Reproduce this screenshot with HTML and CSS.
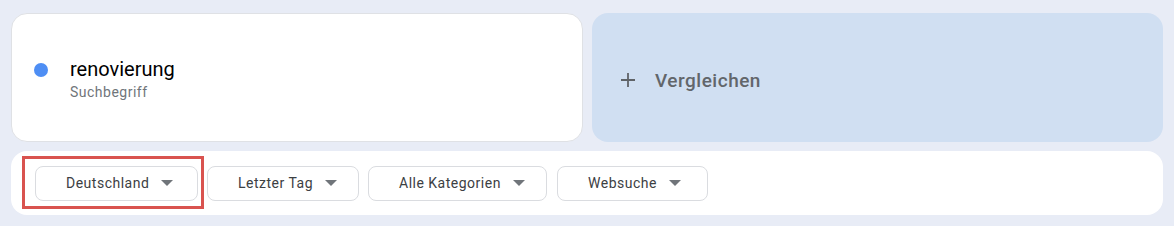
FILE: index.html
```html
<!DOCTYPE html>
<html lang="de">
<head>
<meta charset="utf-8">
<title>Trends</title>
<link rel="stylesheet" href="styles.css">
</head>
<body>
<div class="page">
  <div class="top-row">
    <div class="card term-card">
      <span class="dot"></span>
      <div class="term-text">
        <div class="term-title">renovierung</div>
        <div class="term-sub">Suchbegriff</div>
      </div>
    </div>
    <div class="card compare-card">
      <svg class="plus" width="14" height="14" viewBox="0 0 14 14" aria-hidden="true">
        <path d="M7 0V14M0 7H14" stroke="#5f6368" stroke-width="1.8" fill="none"/>
      </svg>
      <span class="compare-label">Vergleichen</span>
    </div>
  </div>
  <div class="filter-bar">
    <div class="chip chip-country">Deutschland<span class="caret"></span></div>
    <div class="chip chip-time">Letzter Tag<span class="caret"></span></div>
    <div class="chip chip-cat">Alle Kategorien<span class="caret"></span></div>
    <div class="chip chip-type">Websuche<span class="caret"></span></div>
    <div class="highlight"></div>
  </div>
</div>
</body>
</html>
```

FILE: styles.css
```css
* { box-sizing: border-box; }
html, body { margin: 0; padding: 0; }
body {
  background: #e8ecf6;
  font-family: Roboto, "Liberation Sans", sans-serif;
  width: 1174px;
  height: 226px;
  overflow: hidden;
}
.page {
  padding: 13px 11px 11px 11px;
  display: flex;
  flex-direction: column;
  gap: 9px;
}
.top-row {
  display: flex;
  gap: 9px;
  height: 129px;
}
.card {
  border-radius: 16px;
  display: flex;
}
.term-card {
  flex: none;
  width: 572px;
  background: #fff;
  border: 1px solid #dfe1e5;
  padding: 44px 0 0 22px;
  align-items: flex-start;
}
.dot {
  width: 14px;
  height: 14px;
  border-radius: 50%;
  background: #4e8ef4;
  margin-top: 5px;
  flex: none;
}
.term-text {
  margin-left: 22px;
  display: flex;
  flex-direction: column;
}
.term-title {
  font-size: 20px;
  line-height: 22px;
  color: #000;
}
.term-sub {
  font-size: 14px;
  line-height: 18px;
  margin-top: 3px;
  letter-spacing: 0.5px;
  color: #70757a;
}
.compare-card {
  flex: 1;
  background: #d0dff2;
  align-items: center;
  padding: 5px 0 0 29px;
}
.plus {
  flex: none;
  display: block;
}
.compare-label {
  margin-left: 20px;
  font-size: 19px;
  font-weight: 500;
  letter-spacing: 0.5px;
  color: #62666b;
}
.filter-bar {
  position: relative;
  background: #fff;
  border-radius: 16px;
  height: 64px;
  display: flex;
  align-items: center;
  gap: 9px;
  padding-left: 24px;
}
.chip {
  flex: none;
  height: 35px;
  border: 1px solid #dadce0;
  border-radius: 8px;
  display: flex;
  align-items: center;
  font-size: 14px;
  letter-spacing: 0.5px;
  color: #3c4043;
  padding-left: 30px;
}
.chip-country { width: 163px; }
.chip-time { width: 152px; }
.chip-cat { width: 179px; }
.chip-type { width: 151px; margin-left: 1px; }
.caret {
  width: 0;
  height: 0;
  border-left: 6px solid transparent;
  border-right: 6px solid transparent;
  border-top: 6px solid #70757a;
  margin-left: 12px;
}
.highlight {
  position: absolute;
  left: 11px;
  top: 5px;
  width: 182px;
  height: 53px;
  border: 3px solid #d9534f;
  pointer-events: none;
}
```
